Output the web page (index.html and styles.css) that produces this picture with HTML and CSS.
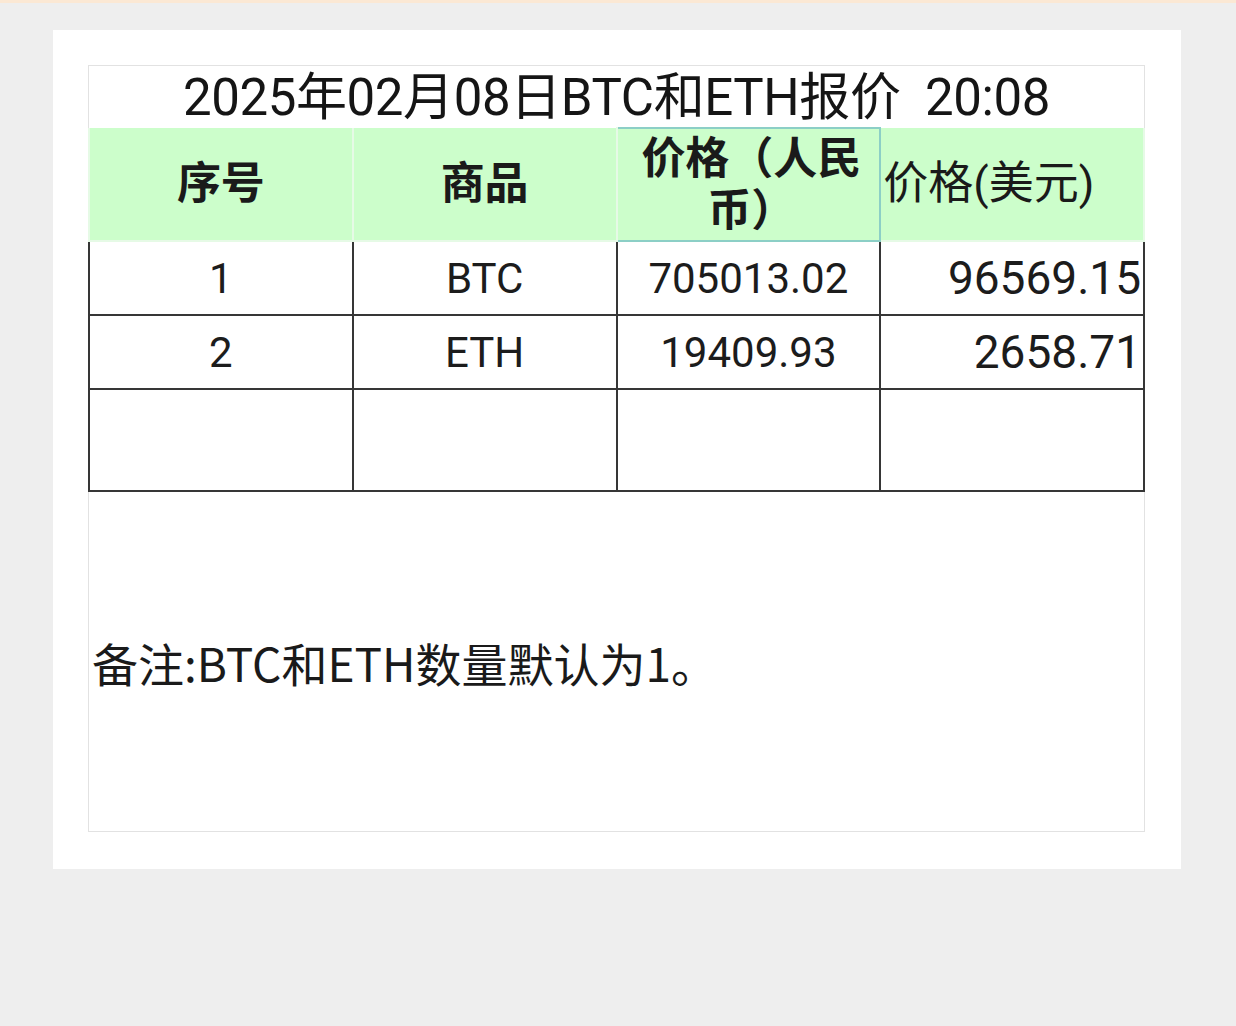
FILE: index.html
```html
<!DOCTYPE html>
<html lang="zh-CN">
<head>
<meta charset="utf-8">
<title>BTC和ETH报价</title>
<link rel="stylesheet" href="styles.css">
</head>
<body>
<div class="topstrip"></div>
<main class="page">
  <section class="card">
    <div class="frame">
      <div class="title">2025年02月08日BTC和ETH报价&nbsp;&nbsp;20:08</div>
      <table class="quote">
        <colgroup><col><col><col><col></colgroup>
        <thead>
          <tr>
            <th class="h-bold">序号</th>
            <th class="h-bold">商品</th>
            <th class="h-bold h-rmb">价格（人民币）</th>
            <th class="h-usd">价格(美元)</th>
          </tr>
        </thead>
        <tbody>
          <tr class="row">
            <td class="c-center">1</td>
            <td class="c-center">BTC</td>
            <td class="c-center">705013.02</td>
            <td class="c-right">96569.15</td>
          </tr>
          <tr class="row">
            <td class="c-center">2</td>
            <td class="c-center">ETH</td>
            <td class="c-center">19409.93</td>
            <td class="c-right">2658.71</td>
          </tr>
          <tr class="row row-empty">
            <td></td><td></td><td></td><td></td>
          </tr>
        </tbody>
      </table>
      <div class="note">备注:BTC和ETH数量默认为1。</div>
    </div>
  </section>
</main>
</body>
</html>
```

FILE: styles.css
```css
* { box-sizing: border-box; }
html, body { margin: 0; padding: 0; }
body {
  background: #eeeeee;
  width: 1236px;
  height: 1026px;
  overflow: hidden;
  font-family: Roboto, "Noto Sans CJK SC", sans-serif;
  color: #1a1a1a;
}
.topstrip {
  height: 3px;
  background: #fbe8d4;
}
.page {
  padding: 27px 0 0 53px;
}
.card {
  width: 1128px;
  height: 839px;
  background: #ffffff;
  padding: 35px 36px 37px 35px;
}
.frame {
  height: 767px;
  border: 1px solid #e2e2e2;
  display: flex;
  flex-direction: column;
}
.title {
  height: 61px;
  font-size: 51px;
  line-height: 64px;
  text-align: center;
  white-space: nowrap;
  color: #151515;
  letter-spacing: -0.4px;
  overflow: hidden;
}
.quote {
  width: calc(100% + 2px);
  margin-left: -1px;
  border-collapse: collapse;
  table-layout: fixed;
}
.quote col { width: 25%; }
.quote th {
  height: 113px;
  background: #ccfecb;
  border: 2px solid #e6fae6;
  border-top: none;
  font-size: 44px;
  line-height: 52px;
  color: #1a1a1a;
  padding: 0;
}
.quote th.h-bold {
  font-weight: 700;
  text-align: center;
}
.quote th.h-rmb {
  border: 2px solid #8ccfc6;
  padding: 0 8px 0 14px;
}
.quote th.h-usd {
  font-weight: 400;
  text-align: left;
  padding-left: 2px;
  font-size: 45px;
  white-space: nowrap;
}
.quote td {
  border: 2px solid #363636;
  font-size: 42px;
  height: 74px;
  padding: 0;
  color: #1c1c1c;
}
.quote tr.row-empty td { height: 102px; }
.c-center { text-align: center; }
.c-right {
  text-align: right;
  padding-right: 2px !important;
  font-size: 46px !important;
}
.note {
  flex: 1;
  display: flex;
  align-items: center;
  padding: 0 0 0 3px;
  font-family: "Noto Sans CJK SC", sans-serif;
  font-size: 46px;
  letter-spacing: 0;
  color: #1a1a1a;
}
```
